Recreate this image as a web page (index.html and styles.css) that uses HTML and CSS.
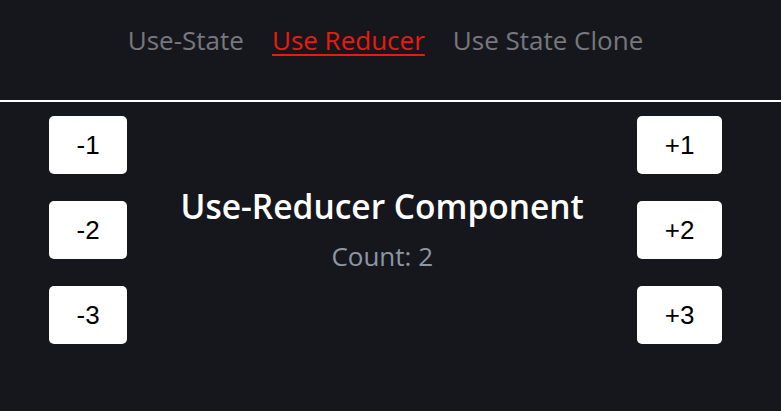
FILE: index.html
```html
<!DOCTYPE html>
<html lang="en">
<head>
<meta charset="UTF-8">
<meta name="viewport" content="width=device-width, initial-scale=1.0">
<title>Use Reducer</title>
<link rel="stylesheet" href="styles.css">
</head>
<body>

<nav class="nav">
  <a href="#" class="nav-link">Use-State</a>
  <a href="#" class="nav-link active">Use Reducer</a>
  <a href="#" class="nav-link">Use State Clone</a>
</nav>

<main class="counter">
  <div class="btn-col">
    <button class="btn">-1</button>
    <button class="btn">-2</button>
    <button class="btn">-3</button>
  </div>
  <div class="counter-body">
    <h1>Use-Reducer Component</h1>
    <p class="count">Count: 2</p>
  </div>
  <div class="btn-col">
    <button class="btn">+1</button>
    <button class="btn">+2</button>
    <button class="btn">+3</button>
  </div>
</main>

</body>
</html>
```

FILE: styles.css
```css
body {
  margin: 0;
  background-color: #16171d;
  font-family: "Open Sans", "Noto Sans", sans-serif;
  height: 100vh;
}
.nav {
  display: flex;
  justify-content: center;
  gap: 28px;
  height: 102px;
  padding: 20px 10px 0 0;
  box-sizing: border-box;
  border-bottom: 2px solid #fff;
}
.nav-link {
  color: #77777d;
  font-size: 26px;
  line-height: 40px;
  text-decoration: none;
}
.nav-link.active {
  color: #ea1a0e;
  text-decoration: underline;
  text-decoration-thickness: 2px;
  text-underline-offset: 4px;
}
.counter {
  display: flex;
  align-items: flex-start;
  padding: 14px 59px 0 49px;
}
.btn-col {
  display: flex;
  flex-direction: column;
  gap: 27px;
}
.btn {
  height: 58px;
  padding: 0 27.5px;
  background-color: #fff;
  color: #000;
  border: none;
  border-radius: 5px;
  font-family: "Liberation Sans", Arial, sans-serif;
  font-size: 26px;
  cursor: pointer;
}
.counter-body {
  flex: 1;
  text-align: center;
  padding-top: 67px;
}
.counter-body h1 {
  margin: 0;
  color: #fff;
  font-size: 33.5px;
  font-weight: 600;
  line-height: 46px;
}
.count {
  margin: 10px 0 0;
  color: #8e96a2;
  font-size: 26px;
  line-height: 34px;
}
```
